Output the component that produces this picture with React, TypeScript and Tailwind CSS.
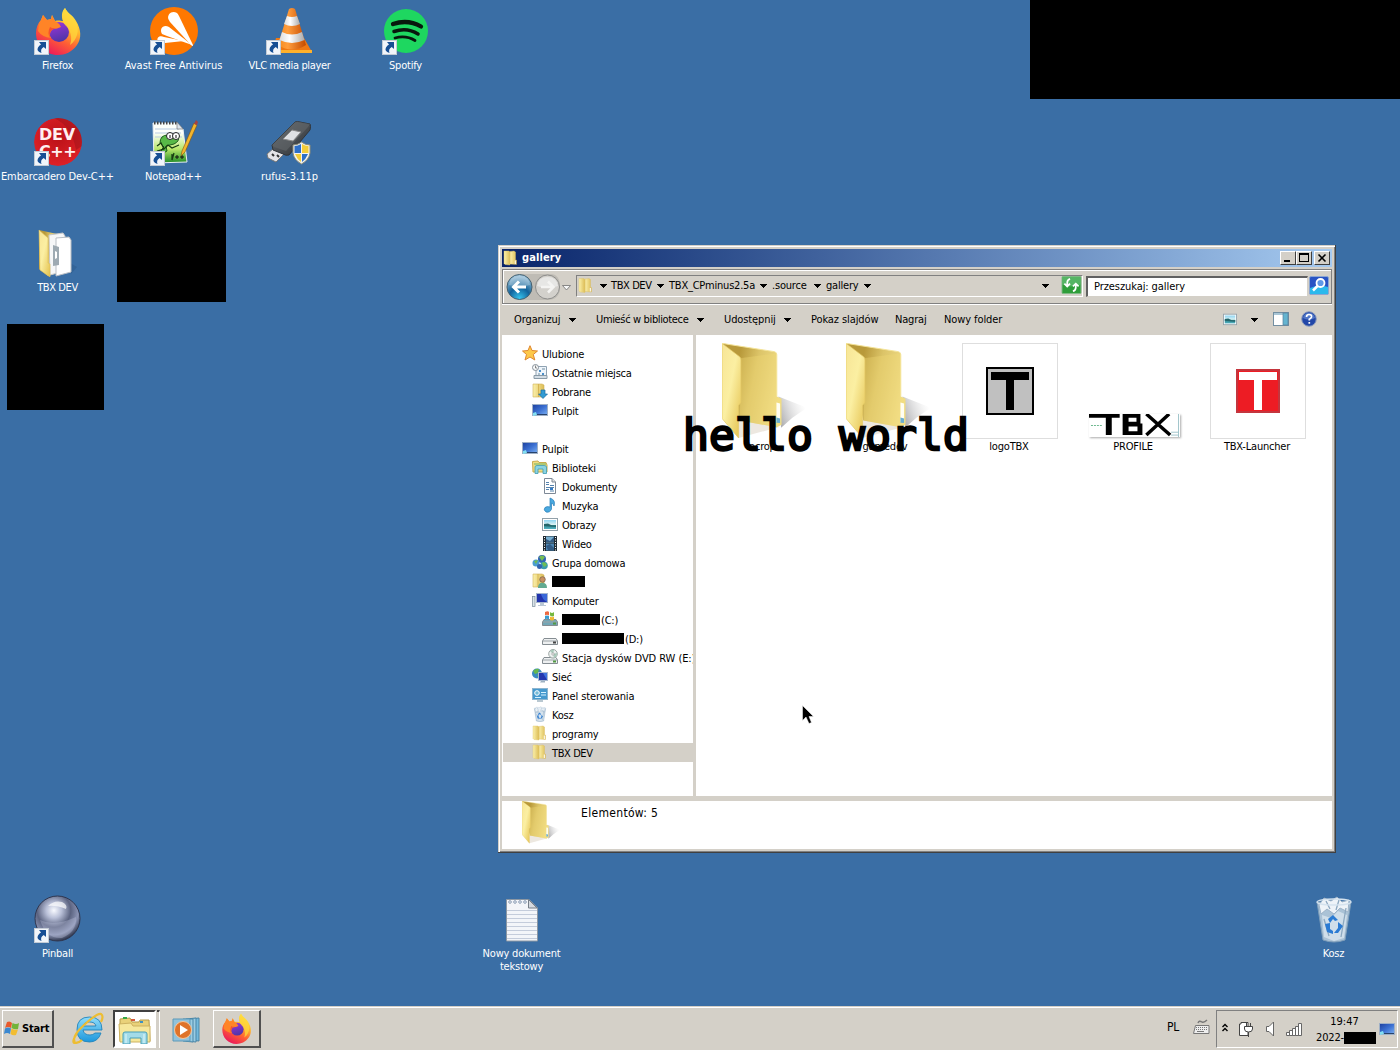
import React from "react";

type Props = { className?: string };

function Defs() {
  return (
    <svg className="absolute h-0 w-0" aria-hidden="true">
      <defs>
        <linearGradient id="ff" x1="0.8" y1="0" x2="0.25" y2="1">
          <stop offset="0" stopColor="#fff44f" />
          <stop offset="0.35" stopColor="#ffb52e" />
          <stop offset="0.62" stopColor="#ff6034" />
          <stop offset="1" stopColor="#e9125f" />
        </linearGradient>
        <linearGradient id="ffglobe" x1="0.3" y1="0" x2="0.6" y2="1">
          <stop offset="0" stopColor="#9a35d8" />
          <stop offset="1" stopColor="#4c35a5" />
        </linearGradient>
        <linearGradient id="flap" x1="0" y1="0" x2="1" y2="1">
          <stop offset="0" stopColor="#f7e596" />
          <stop offset="0.45" stopColor="#fbefa2" />
          <stop offset="1" stopColor="#e3c04c" />
        </linearGradient>
        <linearGradient id="fback" x1="0" y1="0.2" x2="1" y2="0.5">
          <stop offset="0.25" stopColor="#b8993a" />
          <stop offset="0.55" stopColor="#dcc468" />
          <stop offset="1" stopColor="#f3e08c" />
        </linearGradient>
        <linearGradient id="fshadow" x1="0" y1="0.6" x2="1" y2="0.2">
          <stop offset="0" stopColor="#8f8f93" stopOpacity="0.7" />
          <stop offset="0.9" stopColor="#ccc" stopOpacity="0" />
        </linearGradient>
        <linearGradient id="sfold" x1="0" y1="0" x2="1" y2="0">
          <stop offset="0" stopColor="#fbf0ab" />
          <stop offset="1" stopColor="#dcbc55" />
        </linearGradient>
        <linearGradient id="screen" x1="0" y1="0" x2="1" y2="1">
          <stop offset="0" stopColor="#1c3f9e" />
          <stop offset="0.5" stopColor="#3c70d2" />
          <stop offset="1" stopColor="#7fb4f3" />
        </linearGradient>
        <linearGradient id="sky" x1="0" y1="0" x2="0" y2="1">
          <stop offset="0" stopColor="#8ed4f2" />
          <stop offset="0.5" stopColor="#d9f2f4" />
          <stop offset="0.55" stopColor="#2a7f86" />
          <stop offset="1" stopColor="#53b3c4" />
        </linearGradient>
        <radialGradient id="back" cx="0.5" cy="0.95" r="0.95">
          <stop offset="0" stopColor="#35c4ee" />
          <stop offset="0.45" stopColor="#12629b" />
          <stop offset="0.55" stopColor="#2f76a6" />
          <stop offset="1" stopColor="#a9cbe0" />
        </radialGradient>
        <radialGradient id="ball" cx="0.42" cy="0.32" r="0.68">
          <stop offset="0" stopColor="#f8faff" />
          <stop offset="0.25" stopColor="#b9c0d8" />
          <stop offset="0.55" stopColor="#5b6380" />
          <stop offset="0.8" stopColor="#8b94b4" />
          <stop offset="1" stopColor="#343b52" />
        </radialGradient>
        <linearGradient id="cone" x1="0" y1="0" x2="1" y2="0">
          <stop offset="0" stopColor="#f58a1c" />
          <stop offset="0.35" stopColor="#ff9d3d" />
          <stop offset="1" stopColor="#c44a00" />
        </linearGradient>
        <linearGradient id="white" x1="0" y1="0" x2="1" y2="0">
          <stop offset="0" stopColor="#dcdcdc" />
          <stop offset="0.4" stopColor="#fff" />
          <stop offset="1" stopColor="#aaa" />
        </linearGradient>
        <linearGradient id="ie" x1="0" y1="0" x2="0" y2="1">
          <stop offset="0" stopColor="#8fdcfa" />
          <stop offset="1" stopColor="#1d97dc" />
        </linearGradient>
        <radialGradient id="dev" cx="0.5" cy="0.4" r="0.6">
          <stop offset="0" stopColor="#ba1118" />
          <stop offset="1" stopColor="#de2127" />
        </radialGradient>
        <linearGradient id="usb" x1="0" y1="0" x2="1" y2="1">
          <stop offset="0" stopColor="#6b6f73" />
          <stop offset="1" stopColor="#2c3034" />
        </linearGradient>
      </defs>
    </svg>
  );
}

function Firefox({ className }: Props) {
  return (
    <svg viewBox="0 0 48 48" className={className}>
      <path d="M31 1 C34 7 39 8 42 14 C47 22 48 31 43 38 C38 45 31 48 24 48 C11 48 2 38 2 26 C2 21 4 16 7 13 L9 8 L13 13 L17 12 L18 8 L21 14 C25 13 27 14 29 14 C27 9 28 4 31 1Z" fill="url(#ff)" />
      <circle cx="25" cy="25" r="10" fill="url(#ffglobe)" />
      <path d="M7 13 L9 8 L13 13 L17 12 L18 8 L21 14 Q25 16 27 20 Q23 22 19 22 Q14 26 17 31 Q8 30 4 24 Q4 18 7 13Z" fill="#ff8427" />
      <path d="M16 20 Q19 22 22 21 L18 23 Q15 25 16 31 Q13 26 16 20Z" fill="#f5502f" />
      <path d="M31 1 C34 7 39 9 42 15 C46 23 43 33 36 38 C39 30 36 22 31 18 C28 14 27 6 31 1Z" fill="#ffd83c" opacity="0.75" />
    </svg>
  );
}

function Avast() {
  return (
    <svg viewBox="0 0 48 48" className="h-12 w-12">
      <circle cx="24" cy="24" r="24" fill="#ff7800" />
      <path d="M18.3 12 C17 7 22 3 27 6 Q28 7 29 9 L43 38 Q43 40 41 38 L20 15Z" fill="#fff" />
      <path d="M12 27 C9 22 13 17 19 20 L42 38 L17 29Z" fill="#fff" />
      <path d="M8 35 C6 31 9 28 14 30 L34 34 L15 36Z" fill="#fff" />
    </svg>
  );
}

function Vlc() {
  return (
    <svg viewBox="0 0 48 48" className="h-12 w-12">
      <path d="M10 31 L38 31 L46 45 L6 45Z" fill="#ef7812" />
      <path d="M6 43 H46 V46 H6Z" fill="#ffb12b" />
      <path d="M23 2 Q26 0 29 2 L40 38 Q26 47 12 38Z" fill="url(#cone)" />
      <path d="M21 9 Q26 11 31 9 L34 17 Q26 21 18 17Z" fill="url(#white)" />
      <path d="M16 25 Q26 30 36 25 L38.500 33 Q26 39 13.500 33Z" fill="url(#white)" />
    </svg>
  );
}

function Spotify() {
  return (
    <svg viewBox="0 0 48 48" className="h-12 w-12">
      <circle cx="24" cy="24" r="22" fill="#1ed760" />
      <g fill="none" stroke="#08180d" strokeLinecap="round">
        <path d="M11 17 Q26 12 39 19.500" strokeWidth="4.300" />
        <path d="M12 24.500 Q25 20 36 27" strokeWidth="3.500" />
        <path d="M13 31 Q24 28 33 33.500" strokeWidth="2.800" />
      </g>
    </svg>
  );
}

function DevCpp() {
  return (
    <div className="relative h-12 w-12 overflow-hidden rounded-full">
      <svg viewBox="0 0 48 48" className="absolute inset-0 h-12 w-12">
        <circle cx="24" cy="24" r="24" fill="url(#dev)" />
        <path d="M20 0 Q38 8 42 32 L48 28 V0Z" fill="#9b1118" opacity="0.5" />
      </svg>
      <div className="absolute left-[5px] top-[8px] font-['DejaVu_Sans'] text-[16px] font-bold leading-[18px] text-[#fff0f0]">
        <div className="h-[17px]">DEV</div>
        <div className="tracking-[-0.5px]">C++</div>
      </div>
    </div>
  );
}

function NotepadPP() {
  return (
    <svg viewBox="0 0 48 48" className="h-12 w-12">
      <defs>
        <linearGradient id="npp" x1="0" y1="0" x2="0" y2="1">
          <stop offset="0.25" stopColor="#fdfffa" />
          <stop offset="0.65" stopColor="#b9e86a" />
          <stop offset="1" stopColor="#1d8a23" />
        </linearGradient>
      </defs>
      <path d="M3 5 H27 L33 11 L37 44 L4 45Z" fill="url(#npp)" stroke="#e8eef4" />
      <path d="M5 11 H29 M5 15 H31 M5 19 H32" stroke="#b9cbe0" />
      <path d="M4 5 H27" stroke="#444" strokeWidth="3" strokeDasharray="1.500 1.500" />
      <path d="M27 4 V11 H33Z" fill="#dde5ee" stroke="#777" strokeWidth="0.700" />
      <path d="M10 25 Q10 17 18 17 L28 19 Q30 23 24 26 L16 28 L17 33 Q13 36 11 32 L14 29Z" fill="#58b947" stroke="#1c5c19" />
      <path d="M7 28 L11 25 L14 31 L18 27 L22 30 L29 27 M7 33 L14 31 M24 35 L22 42 M22 36 V42" fill="none" stroke="#173d12" strokeWidth="1.300" />
      <circle cx="20" cy="18" r="3.500" fill="#fff" stroke="#222" />
      <circle cx="26" cy="18" r="3.500" fill="#fff" stroke="#222" />
      <path d="M20 17 V20 M26 17 V20 M25 39 H29 M27 37 V41 M30 39 H34 M32 37 V41" stroke="#111" strokeWidth="1" />
      <path d="M32 33 L44 5 L47 7 L35 34 L31 38Z" fill="#f2b52d" stroke="#805413" strokeWidth="0.600" />
      <path d="M44 6 L46 2 L48 4 L47 7Z" fill="#a6433f" />
    </svg>
  );
}

function Rufus() {
  return (
    <svg viewBox="0 0 48 48" className="h-12 w-12">
      <path d="M1 36 L8 30 L18 36 L10 44 L2 40Z" fill="#e4e4e8" stroke="#777" />
      <path d="M6 36 L8 38 M11 37 L13 39" stroke="#333" strokeWidth="2" />
      <path d="M6 27 L29 4 Q31 3 34 4 L44 6 Q45 8 44 12 L23 37 Q20 38 17 36 L7 32Z" fill="url(#usb)" stroke="#303439" />
      <path d="M6 27 L29 4 Q31 3 34 4 L44 6 L42 9 L20 33 L8 29Z" fill="#63676b" opacity="0.6" />
      <path d="M26 12 L35 14 L27 23 L17 21Z" fill="#dfe1e4" stroke="#8a8a8a" />
      <g transform="translate(26 24)">
        <path d="M1 3 Q6 3 9.500 0 Q13 3 18 3 V11 Q17 18 9.500 22 Q2 18 1 11Z" fill="#f3f3ee" stroke="#8d8b78" />
        <path d="M9 2 V11 H2.500 V4 Q6 4 9 2Z M10 12 H16 Q14 17 10 20Z" fill="#2e6fc8" />
        <path d="M10 2 V11 H16.500 V4 Q13 4 10 2Z M9 12 H3 Q5 17 9 20Z" fill="#f4cd38" />
      </g>
    </svg>
  );
}

function OpenFolder() {
  return (
    <svg viewBox="0 0 48 48" className="h-12 w-12">
      <path d="M36 34 L43 38 L37 45Z" fill="#173a63" opacity="0.200" />
      <path d="M5 1 L23 5 V44 L14 47 L5 40Z" fill="url(#fback)" />
      <path d="M15 6 L29 4 L31 7 V42 L16 46Z" fill="#f6f7f8" stroke="#c7c7c7" />
      <path d="M22 9 L35 8 L37 11 V43 L22 47Z" fill="#fff" stroke="#b9bec4" />
      <path d="M19 16 L25 18 V36 L19 37Z" fill="#9eaab2" />
      <path d="M21 22 L23 23 V29 L21 30Z" fill="#fff" />
      <path d="M5 1 L14 9 V34 L16 35 V48 L6 41Z" fill="url(#flap)" stroke="#dec05a" strokeWidth="0.600" />
    </svg>
  );
}

function Pinball() {
  return (
    <svg viewBox="0 0 48 48" className="h-12 w-12">
      <circle cx="23.500" cy="23.500" r="22.500" fill="url(#ball)" stroke="#303750" />
      <path d="M6 25 Q20 32 42 22 Q43 37 28 43 Q12 44 6 25Z" fill="#bdc4dd" opacity="0.350" />
      <path d="M14 11 Q20 5 28 7 Q34 10 32 14 Q22 10 14 11Z" fill="#fff" opacity="0.700" />
    </svg>
  );
}

function TextFile() {
  return (
    <svg viewBox="0 0 48 48" className="h-12 w-12">
      <path d="M8.500 4.500 H31 L39.500 13 V46 H8.500Z" fill="#f3f5f9" stroke="#8c97a3" />
      <path d="M9 15.500H39M9 19.500H39M9 23.500H39M9 27.500H39M9 31.500H39M9 35.500H39M9 39.500H39M9 43.500H39" stroke="#c4ccdb" />
      <path d="M30.500 4.500 V13 H39Z" fill="#d5d9df" stroke="#777f88" />
      <g fill="#f6f8fb" stroke="#8b9db5">
        <circle cx="12" cy="7" r="1.300" />
        <circle cx="17" cy="7" r="1.300" />
        <circle cx="22" cy="7" r="1.300" />
        <circle cx="27" cy="7" r="1.300" />
      </g>
    </svg>
  );
}

function Bin({ className }: Props) {
  return (
    <svg viewBox="0 0 48 48" className={className}>
      <path d="M7 7 L41 7 L35 45 Q24 49 13 45Z" fill="#b7cbdc" fillOpacity="0.9" stroke="#7f9eb9" />
      <path d="M9 10 L14 3 L21 6 L27 2 L32 7 L39 5 L38 17 L30 13 L24 19 L17 14 L11 19Z" fill="#eef3f8" stroke="#9db3c8" />
      <path d="M12 20 L21 23 L28 16 L37 20 L34 43 L24 46 L14 42Z" fill="#e3edf4" opacity="0.650" />
      <path d="M16 6 L20 14 M29 5 L26 15 M14 24 L19 41 M36 13 L31 42" stroke="#8ca8c0" strokeWidth="1.300" />
      <path d="M18 24 L23 20 L28 25 L25 26 L23 24 L20 28Z M15 29 L20 28 L20 34 L23 36 V39 L17 37Z M28 27 L33 31 L28 38 L24 38 L28 33Z" fill="#2b7bd3" />
      <ellipse cx="24" cy="7" rx="17" ry="3" fill="none" stroke="#d4e2ee" strokeWidth="1.300" />
    </svg>
  );
}

function ShortcutArrow() {
  return (
    <svg viewBox="0 0 15 15" className="absolute bottom-0 left-0 h-[15px] w-[15px]">
      <rect x="0.500" y="0.500" width="14" height="14" fill="#f1f5fa" stroke="#c3cbd5" />
      <path d="M5 2 H12 V9 L9.700 7 Q6 9 7.500 13 Q2 11 4 7.500 Q5 5.500 7 4.500Z" fill="#174f94" />
    </svg>
  );
}

function DesktopIcon({
  place,
  label,
  shortcut,
  children,
  track = "",
}: {
  place: string;
  label: string;
  shortcut?: boolean;
  children: React.ReactNode;
  track?: string;
}) {
  return (
    <div className={`absolute flex w-[122px] flex-col items-center ${place}`}>
      <div className="relative h-12 w-12">
        {children}
        {shortcut && <ShortcutArrow />}
      </div>
      <div className={`mr-px mt-1 whitespace-pre-line text-center leading-[13px] text-white ${track}`}>{label}</div>
    </div>
  );
}

function BigFolder({ className }: Props) {
  return (
    <svg viewBox="0 0 256 290" className={className}>
      <path d="M170 160 L256 194 L212 224 L178 254Z" fill="url(#fshadow)" />
      <path d="M0 225 L50 285 L172 252 L120 238Z" fill="#a68b65" opacity="0.200" />
      <path d="M0 0 L158 25 Q165 27 165 34 V160 L179 167 V245 L165 253 L52 232Z" fill="url(#fback)" />
      <path d="M54 45 L165 30 V160 L179 167 V245 L165 253 L54 232Z" fill="#f0d873" opacity="0.380" />
      <path d="M164 178 L175 181 V238 L164 236Z" fill="#fffef2" />
      <path d="M164 223 L175 226 V240 L164 239Z" fill="#6baed0" />
      <path d="M0 0 L53 40 Q57 43 57 50 V178 L50 187 V285 L0 226Z" fill="url(#flap)" stroke="#e4c965" strokeWidth="2" />
      <path d="M0 0 L158 25 Q165 27 165 34 V160" fill="none" stroke="#f4e49a" strokeWidth="3" />
    </svg>
  );
}

function SmallFolder({ className = "h-4 w-4" }: Props) {
  return (
    <svg viewBox="0 0 16 16" className={className}>
      <path d="M7 1.500 L11 1 L12.500 2 V10 H13.500 V14.500 L7 14Z" fill="url(#sfold)" stroke="#d8bc61" strokeWidth="0.400" />
      <path d="M1 1 L6 1 L7 2 V15 L2 14.500 L1 13.500Z" fill="url(#sfold)" stroke="#dec46c" strokeWidth="0.400" />
      <path d="M12.300 10.500V14" stroke="#fff" />
    </svg>
  );
}

function Monitor({ className = "h-4 w-4" }: Props) {
  return (
    <svg viewBox="0 0 16 16" className={className}>
      <rect x="0.500" y="2.500" width="15" height="11" fill="url(#screen)" stroke="#9fb0c7" />
      <path d="M1 12.500 H15" stroke="#27436c" />
      <path d="M1 11 L4 10 L5 13 L1 14Z" fill="#82dff2" />
    </svg>
  );
}

function Picture({ className = "h-4 w-4" }: Props) {
  return (
    <svg viewBox="0 0 16 16" className={className}>
      <rect x="0.500" y="2.500" width="15" height="12" fill="#fff" stroke="#93a1aa" />
      <rect x="2" y="4" width="12" height="9" fill="url(#sky)" />
      <path d="M2 8 L6 7.500 L10 9.500 L14 9.500 V11 L2 10Z" fill="#24666b" />
    </svg>
  );
}

function TreeIcon({ kind }: { kind: string }) {
  if (kind === "folder") return <SmallFolder />;
  if (kind === "desktop") return <Monitor />;
  if (kind === "picture") return <Picture />;
  if (kind === "bin") return <Bin className="h-4 w-4" />;
  return (
    <svg viewBox="0 0 16 16" className="h-4 w-4">
      {kind === "star" && <path d="M8 .7 L10 5.500 L15.500 6 L11.300 9.500 L12.800 15 L8 12 L3 15 L4.500 9.500 L.5 6 L6 5.500Z" fill="#fdc849" stroke="#df8630" />}
      {kind === "recent" && (
        <g>
          <path d="M4 2.500H14.500V12.500H4Z" fill="#eef5fb" stroke="#8fa2b2" />
          <path d="M2 11.500H15V14.500H2Z" fill="#d3dde5" stroke="#899aa7" />
          <path d="M7 6H9V8H7ZM10 9H12V11H10Z" fill="#4b8fc9" />
          <path d="M10 5H13M6 10H8" stroke="#718b9d" />
          <circle cx="3.500" cy="3.500" r="3" fill="#f8fafb" stroke="#879099" />
          <path d="M3.500 1.500V4H5" fill="none" stroke="#555" strokeWidth="0.700" />
        </g>
      )}
      {kind === "download" && (
        <g>
          <path d="M1 1H10L12 2V14H1Z" fill="url(#sfold)" stroke="#d1b257" strokeWidth="0.600" />
          <path d="M6.500 1V14" stroke="#d6b554" />
          <path d="M9 7H13V11H15.500L11 15.500L6.500 11H9Z" fill="#329bd3" stroke="#1b6ca1" strokeWidth="0.700" />
        </g>
      )}
      {kind === "library" && (
        <g>
          <path d="M.5 2.500 L6 2 L7 3.500H14L15 6V13H1Z" fill="#f2dd80" stroke="#c8ab4d" />
          <path d="M2 5H14" stroke="#6ab468" />
          <path d="M3 14.500V8Q3 6.500 5 6.500H12Q14.500 6.500 14.500 8V14.500H11V10H6V14.500Z" fill="#8bd3e2" stroke="#3f9db4" strokeWidth="0.800" />
        </g>
      )}
      {kind === "doc" && (
        <g>
          <path d="M2.500.5H10L13.500 4V15.500H2.500Z" fill="#fff" stroke="#7e8996" />
          <path d="M10 .5V4H13.500" fill="#ddd" stroke="#7e8996" />
          <path d="M4 4.500H7M4 6.500H7M8 7.500H12M4 9.500H12M4 11.500H7M8 13H12" stroke="#5583ae" />
          <path d="M8 10H11V12H8Z" fill="#357bc4" />
        </g>
      )}
      {kind === "music" && <path d="M8 1 Q14 3 12 9 Q11 6 9.500 6 V12 Q8 16 4 15 Q1 13 3 10.500 Q5 9 8 10Z" fill="#4aa9df" stroke="#287eb9" strokeWidth="0.700" />}
      {kind === "video" && (
        <g>
          <rect x="1" y="1" width="14" height="15" fill="#202b33" />
          <rect x="4" y="1.500" width="8" height="6" fill="#78afd1" />
          <rect x="4" y="8.500" width="8" height="7" fill="#4c86b4" />
          <path d="M4 4L8 6L12 2V7H4ZM4 11L8 9L12 13V15H6Z" fill="#315a83" />
          <path d="M2.500 2V16M13.500 2V16" stroke="#fff" strokeDasharray="1 1.500" />
        </g>
      )}
      {kind === "home" && (
        <g>
          <circle cx="10" cy="5" r="4" fill="#2f62b4" />
          <path d="M7 3Q10 0 13 3L10 7Z" fill="#75bd52" />
          <circle cx="4" cy="9" r="3.500" fill="#4b9dd0" />
          <circle cx="12" cy="11.500" r="3.800" fill="#3a9cae" />
          <path d="M2 7L6 6L4 10ZM10 9Q13 7 15 11L12 13Z" fill="#70bd51" />
          <circle cx="7.500" cy="12.500" r="2.500" fill="#3263b0" />
        </g>
      )}
      {kind === "user" && (
        <g>
          <path d="M1 1H10L12 2V14H1Z" fill="url(#sfold)" stroke="#d1b257" strokeWidth="0.600" />
          <path d="M6 1V14" stroke="#d6b554" />
          <circle cx="10.500" cy="6.500" r="2.800" fill="#c89062" stroke="#665343" strokeWidth="0.600" />
          <path d="M6 14Q7 9 11 10Q15 10 15 15H6Z" fill="#62aa91" />
        </g>
      )}
      {kind === "computer" && (
        <g>
          <rect x="0.500" y="4.500" width="2.500" height="10" fill="#dae3e8" stroke="#798b99" strokeWidth="0.700" />
          <rect x="4.500" y="1.500" width="11" height="9" fill="#2233ac" stroke="#a5b5ce" />
          <path d="M9 2H15V10Q10 7 9 2Z" fill="#3a68d8" />
          <path d="M8 11H12V13H14V14H6V13H8Z" fill="#b9c7d5" />
        </g>
      )}
      {(kind === "driveC" || kind === "drive" || kind === "dvd") && (
        <g>
          <path d="M2 8.500H14L15.500 11V14.500H.5V11Z" fill={kind === "driveC" ? "#73a7b7" : "#eef0f1"} stroke="#858d92" />
          <path d="M1 11H15" stroke="#9da4a8" />
          <rect x="11" y="11.500" width="3" height="2" fill={kind === "drive" ? "#444" : "#529944"} />
        </g>
      )}
      {kind === "driveC" && (
        <g>
          <path d="M3 1Q6-.5 7 1V4.500Q5 3 3 4.500Z" fill="#ed6940" />
          <path d="M8 1Q10 3 12 1V5Q10 6 8 4.500Z" fill="#76b83f" />
          <path d="M3 5Q5 4 7 5V9Q5 7 3 8.500Z" fill="#389bcf" />
          <path d="M8 5.500Q10 7 12 5.500V9Q10 10 8 9Z" fill="#f0b633" />
        </g>
      )}
      {kind === "dvd" && (
        <g>
          <circle cx="11" cy="4.800" r="4.300" fill="#edf1f0" stroke="#9ca6a4" />
          <path d="M11 5L8 2Q10 0 12 1ZM11 5L15 4Q15 8 12 9Z" fill="#a9cabb" />
          <circle cx="11" cy="5" r="1.200" fill="#fff" stroke="#888" strokeWidth="0.600" />
        </g>
      )}
      {kind === "network" && (
        <g>
          <circle cx="5" cy="5.500" r="5" fill="#3a8bc2" />
          <path d="M1 3Q4 0 7 1L6 5L3 6ZM5 7L8 6L7 10Z" fill="#66b84f" />
          <rect x="6.500" y="4.500" width="9" height="8" fill="#2237af" stroke="#a8bad0" />
          <path d="M11 5H15V12Z" fill="#3e73e0" />
          <path d="M9 13H13V14.500H8Z" fill="#9eb1c1" />
        </g>
      )}
      {kind === "panel" && (
        <g>
          <rect x="0.500" y="1.500" width="15" height="11" fill="#4699ce" stroke="#8db5d0" />
          <circle cx="5" cy="6" r="2.300" fill="#73bbd9" stroke="#fff" />
          <path d="M9 5.500H14M9 8H14M3 10.500H9" stroke="#d4f1ff" />
          <path d="M5 13H11V15H5Z" fill="#b9c8d1" />
        </g>
      )}
    </svg>
  );
}

const tree = [
  { label: "Ulubione", icon: "star", level: 0 },
  { label: "Ostatnie miejsca", icon: "recent", level: 1 },
  { label: "Pobrane", icon: "download", level: 1 },
  { label: "Pulpit", icon: "desktop", level: 1 },
  { label: "", icon: "", level: 0 },
  { label: "Pulpit", icon: "desktop", level: 0 },
  { label: "Biblioteki", icon: "library", level: 1 },
  { label: "Dokumenty", icon: "doc", level: 2 },
  { label: "Muzyka", icon: "music", level: 2 },
  { label: "Obrazy", icon: "picture", level: 2 },
  { label: "Wideo", icon: "video", level: 2 },
  { label: "Grupa domowa", icon: "home", level: 1 },
  { label: "", icon: "user", level: 1, bar: "w-[33px]" },
  { label: "Komputer", icon: "computer", level: 1 },
  { label: "(C:)", icon: "driveC", level: 2, bar: "w-[38px]" },
  { label: "(D:)", icon: "drive", level: 2, bar: "w-[62px]" },
  { label: "Stacja dysków DVD RW (E:)", icon: "dvd", level: 2, track: "tracking-[-0.07px]" },
  { label: "Sieć", icon: "network", level: 1 },
  { label: "Panel sterowania", icon: "panel", level: 1, track: "tracking-[-0.1px]" },
  { label: "Kosz", icon: "bin", level: 1 },
  { label: "programy", icon: "folder", level: 1 },
  { label: "TBX DEV", icon: "folder", level: 1, selected: true, track: "tracking-[-0.4px]" },
];
const indents = ["pl-5", "pl-[30px]", "pl-10"];

function Tree() {
  return (
    <div className="w-[191px] shrink-0 overflow-hidden bg-white pt-[9px]">
      {tree.map((t, i) => (
        <div
          key={i}
          className={`flex h-[19px] items-center whitespace-nowrap ${indents[t.level]} ${t.selected ? "bg-[#d4d0c8] shadow-[inset_1px_0_0_#fff]" : ""}`}
        >
          {t.icon && (
            <span className="mb-[2px] mr-1 h-4 w-4 shrink-0">
              <TreeIcon kind={t.icon} />
            </span>
          )}
          {t.bar && <span className={`mr-px h-[11px] shrink-0 bg-black ${t.bar}`} />}
          <span className={`pt-[2px] ${t.track ?? ""}`}>{t.label}</span>
        </div>
      ))}
    </div>
  );
}

function Caret({ className = "" }: Props) {
  return (
    <svg viewBox="0 0 7 4" className={`h-1 w-[7px] shrink-0 ${className}`} shapeRendering="crispEdges">
      <path d="M0 0H7L3.500 4Z" />
    </svg>
  );
}

function CaptionButton({ kind }: { kind: "min" | "max" | "close" }) {
  return (
    <div className="flex h-[14px] w-4 items-center justify-center border border-b-[#404040] border-l-white border-r-[#404040] border-t-white bg-[#d4d0c8]">
      <svg viewBox="0 0 12 10" className="h-[10px] w-3" fill="none" stroke="#000" shapeRendering={kind === "close" ? "auto" : "crispEdges"}>
        {kind === "min" && <path d="M2 8H8" strokeWidth="2" />}
        {kind === "max" && <path d="M1.500 1V8.500H10.500V1M1 1H11" strokeWidth="1.400" />}
        {kind === "close" && <path d="M2.500 1.500L9.500 8.500M9.500 1.500L2.500 8.500" strokeWidth="1.600" />}
      </svg>
    </div>
  );
}

function Crumb({ label, gap }: { label: string; gap: string }) {
  return <span className={`shrink-0 whitespace-nowrap ${gap}`}>{label}</span>;
}

function NavBar() {
  return (
    <div className="flex h-[35px] items-center border border-[#808080] pl-[3px] shadow-[inset_1px_1px_0_#fff,0_1px_0_#fff]">
      <svg viewBox="0 0 66 28" className="h-7 w-[66px] shrink-0">
        <path d="M13 1 H44 Q54 1 54 14 Q54 27 41 27 H13Z" fill="#bfbcb5" />
        <circle cx="13.500" cy="14" r="12.500" fill="url(#back)" stroke="#44606f" />
        <path d="M3 12Q4 3 13.500 3Q23 3 24 12Q13 15 3 12Z" fill="#fff" opacity="0.250" />
        <path d="M20 14H8M13 8.500L7.500 14L13 19.500" fill="none" stroke="#fff" strokeWidth="3" />
        <circle cx="41.500" cy="14" r="12" fill="#d3d1cc" stroke="#8e8e8c" />
        <path d="M31 13Q32 4 41.500 4Q51 4 52 13Q42 17 31 13Z" fill="#eee" opacity="0.750" />
        <path d="M35 14H47M42 8.500L47.500 14L42 19.500" fill="none" stroke="#f4f4f2" strokeWidth="2.500" />
        <path d="M56.500 12.500H64.500L60.500 17Z" fill="#f7f7f7" stroke="#707070" strokeWidth="0.800" />
      </svg>
      <div className="mb-px ml-1 flex h-[22px] w-[507px] shrink-0 items-center border border-b-white border-l-[#808080] border-r-white border-t-[#808080] pb-px pl-px">
        <SmallFolder className="h-[17px] w-4" />
        <Caret className="ml-[6px] w-[6px]" />
        <Crumb label="TBX DEV" gap="ml-[4px] w-[46px] tracking-[-0.4px]" />
        <Caret className="w-[6px]" />
        <Crumb label="TBX_CPminus2.5a" gap="ml-[5px] w-[91px] tracking-[-0.22px]" />
        <Caret className="w-[6px]" />
        <Crumb label=".source" gap="ml-[5px] w-[42px]" />
        <Caret className="w-[6px]" />
        <Crumb label="gallery" gap="ml-[5px] w-[38px]" />
        <Caret className="w-[6px]" />
        <span className="flex-1" />
        <Caret className="mr-3 w-2" />
        <svg viewBox="0 0 21 20" className="h-[19px] w-[21px] shrink-0">
          <rect x="0.500" y="0.500" width="20" height="18" rx="1" fill="#2f9e3a" stroke="#80b985" />
          <path d="M1 1H20V9Q10 13 1 9Z" fill="#75c986" opacity="0.550" />
          <path d="M9 3Q6 4 6 7V10M3 8L6 11L9 8M12 16Q15 15 15 12V9M12 11L15 8L18 11" fill="none" stroke="#fff" strokeWidth="1.800" />
        </svg>
      </div>
      <div className="mb-px ml-[3px] flex h-[21px] w-[222px] shrink-0 items-center border-b border-l-2 border-r border-t-2 border-b-[#d4d0c8] border-l-[#606060] border-r-[#d4d0c8] border-t-[#606060] bg-white pl-[6px] tracking-[-0.08px]">
        Przeszukaj: gallery
      </div>
      <svg viewBox="0 0 20 20" className="mb-px ml-[1px] h-5 w-5 shrink-0">
        <rect x="0.500" y="0.500" width="19" height="18" rx="1.500" fill="#2853c4" stroke="#8ca6d1" />
        <path d="M1 12Q10 8 19 11V18H1Z" fill="#2bb9ec" />
        <circle cx="11.500" cy="7" r="4" fill="#5f98e7" stroke="#fff" strokeWidth="1.800" />
        <path d="M8.500 10L4 14.500" stroke="#fff" strokeWidth="2.500" />
      </svg>
    </div>
  );
}

function Toolbar() {
  return (
    <div className="flex h-[31px] items-center whitespace-nowrap pl-3">
      <span className="w-[55px] tracking-[-0.1px]">Organizuj</span>
      <Caret />
      <span className="ml-5 w-[101px] tracking-[-0.35px]">Umieść w bibliotece</span>
      <Caret />
      <span className="ml-5 w-[60px] tracking-[-0.1px]">Udostępnij</span>
      <Caret />
      <span className="ml-5 w-[84px] tracking-[-0.1px]">Pokaz slajdów</span>
      <span className="w-[49px]">Nagraj</span>
      <span className="tracking-[-0.1px]">Nowy folder</span>
      <span className="flex-1" />
      <Picture className="mb-[2px] h-[14px] w-[14px]" />
      <Caret className="ml-[14px] mr-[15px]" />
      <svg viewBox="0 0 16 14" className="mb-[2px] h-[14px] w-4">
        <rect x="0.500" y="0.500" width="15" height="13" fill="#fff" stroke="#738fa2" />
        <path d="M1 2H10" stroke="#a9c6d6" strokeWidth="2" />
        <rect x="10" y="1" width="5" height="12" fill="#64b4d0" stroke="#577f9b" strokeWidth="0.700" />
      </svg>
      <svg viewBox="0 0 16 16" className="mb-[2px] ml-3 mr-[15px] h-4 w-4">
        <circle cx="8" cy="8" r="7.300" fill="#2247a8" stroke="#8d9cbc" />
        <path d="M2 7Q3 2 8 2Q13 2 14 7Q8 10 2 7Z" fill="#7196dc" opacity="0.600" />
        <path d="M5.500 6Q5.500 3.500 8 3.500Q11 3.500 10.500 6Q10 7.500 8.300 8.200V9.500M8.300 11V12.800" fill="none" stroke="#fff" strokeWidth="1.700" />
      </svg>
    </div>
  );
}

function FileCell({ label, children }: { label: string; children: React.ReactNode }) {
  return (
    <div className="flex w-[124px] flex-col items-center">
      <div className="ml-[2px] flex h-[97px] items-start">{children}</div>
      <span className="leading-[13px]">{label}</span>
    </div>
  );
}

function Files() {
  return (
    <div className="flex flex-1 bg-white pl-[3px] pt-2">
      <FileCell label="incrop">
        <BigFolder className="ml-[5px] h-[97px] w-[85px]" />
      </FileCell>
      <FileCell label="gamedev">
        <BigFolder className="ml-[5px] h-[97px] w-[85px]" />
      </FileCell>
      <FileCell label="logoTBX">
        <div className="flex h-24 w-24 items-center justify-center border border-[#dedede]">
          <svg viewBox="0 0 48 48" className="h-12 w-12" shapeRendering="crispEdges">
            <rect x="1" y="1" width="46" height="46" fill="#c0c0c0" stroke="#000" strokeWidth="2" />
            <path d="M5 5H43V13H28V43H20V13H5Z" />
          </svg>
        </div>
      </FileCell>
      <FileCell label="PROFILE">
        <div className="flex h-24 items-end pb-[2px]">
          <svg viewBox="0 0 92 24" className="h-[23px] w-[91px] shadow-[1px_1px_2px_#aaa]" preserveAspectRatio="none">
            <rect width="92" height="24" fill="#fff" />
            <path d="M0 0H31V4H23V22H17V4H0ZM34 0H52V10H54V22H34ZM40 4V8H48V4ZM40 13V18H49V13Z" fillRule="evenodd" />
            <path d="M58 0L82 22M81 0L58 22" stroke="#000" strokeWidth="3.500" />
            <path d="M2 12H14" stroke="#6ab78d" strokeDasharray="2 1" />
            <path d="M83 19H91M83 22H91M90.500 0V24" stroke="#9fc3cb" />
          </svg>
        </div>
      </FileCell>
      <FileCell label="TBX-Launcher">
        <div className="flex h-24 w-24 items-center justify-center border border-[#dedede]">
          <svg viewBox="0 0 44 44" className="h-11 w-11">
            <rect x="1" y="1" width="42" height="42" fill="#ed1c24" stroke="#c4353d" strokeWidth="2" />
            <path d="M3 3H41V11H26V41H18V11H3Z" fill="#fff" />
          </svg>
        </div>
      </FileCell>
    </div>
  );
}

function ExplorerWindow() {
  return (
    <div className="absolute left-[498px] top-[245px] flex h-[608px] w-[838px] flex-col border-b border-r border-[#404040] bg-[#d4d0c8] p-[3px] pl-1 pt-1 shadow-[inset_1px_1px_0_#d4d0c8,inset_2px_2px_0_#fff,inset_-1px_-1px_0_#808080]">
      <div className="flex h-[18px] shrink-0 items-center bg-gradient-to-r from-[#0a246a] to-[#a6caf0] pl-px">
        <SmallFolder />
        <span className="ml-[3px] flex-1 font-bold tracking-[0.1px] text-white">gallery</span>
        <div className="mr-[2px] flex">
          <CaptionButton kind="min" />
          <CaptionButton kind="max" />
          <span className="w-[2px]" />
          <CaptionButton kind="close" />
        </div>
      </div>
      <div className="mt-[2px]">
        <NavBar />
      </div>
      <Toolbar />
      <div className="flex h-[461px] shrink-0">
        <Tree />
        <div className="w-[3px] bg-[#d4d0c8]" />
        <Files />
      </div>
      <div className="mt-[5px] flex h-12 shrink-0 bg-white pl-5">
        <BigFolder className="h-[43px] w-[38px]" />
        <span className="ml-[21px] mt-[3px] text-[12px] leading-[18px] tracking-[0.32px]">Elementów: 5</span>
      </div>
    </div>
  );
}

function Taskbar() {
  return (
    <div className="absolute inset-x-0 bottom-0 flex h-11 border-t border-[#d4d0c8] bg-[#d4d0c8] pt-[3px] shadow-[inset_0_1px_0_#fff]">
      <div className="ml-[2px] flex h-[38px] w-[52px] items-center border-b-2 border-l border-r-2 border-t border-b-[#505050] border-l-white border-r-[#505050] border-t-white pl-px">
        <svg viewBox="0 0 16 15" className="h-[15px] w-4">
          <path d="M3 1Q6-.5 8 2L7 7Q4 5 1 7Z" fill="#e85a2c" />
          <path d="M8.500 2Q12 4 15 2L14 8Q11 9 7.500 7Z" fill="#72b43a" />
          <path d="M1 7.500Q4 5.500 7 7.500L6 13Q3 11 0 13Z" fill="#3b88d0" />
          <path d="M7.500 7.500Q11 9.500 14 8.500L12 14Q9 15 6.500 13Z" fill="#f2bd31" />
        </svg>
        <span className="ml-[2px] font-bold tracking-[-0.15px] text-black">Start</span>
      </div>
      <svg viewBox="0 0 32 32" className="ml-[18px] mt-[2px] h-8 w-8">
        <path d="M30 18H11Q12 23 18 23Q21 23 23 21H29Q26 30 17.500 30Q5 30 5 17.500Q5 5 17.500 5Q30 5 30 18ZM11 14H24Q23 10 17.500 10Q12 10 11 14Z" fillRule="evenodd" fill="url(#ie)" stroke="#2384bb" strokeWidth="0.900" />
        <path d="M5 21Q-1 31 3 31Q7 31 10 28M3 30Q-1 25 12 13Q25 1 29 2Q32 4 29 10" fill="none" stroke="#edbd32" strokeWidth="2.200" />
      </svg>
      <div className="ml-[9px] flex h-[38px] w-[43px] items-center justify-center border-2 border-b-white border-l-[#404040] border-r-white border-t-[#404040] bg-white">
        <svg viewBox="0 0 34 30" className="h-[30px] w-[34px]">
          <path d="M2 5L12 4L14 8H21L22 6H31L32 27H2Z" fill="#e9d179" stroke="#b69b4a" />
          <path d="M1 10L13 9L15 12H32V28H2Z" fill="#f6e79b" stroke="#cdb260" />
          <path d="M5 3H9V5H5Z" fill="#35a847" />
          <path d="M13 5H17V7H13Z" fill="#d5593a" />
          <path d="M22 7H25V9H22Z" fill="#3c91c4" />
          <path d="M5 30V20Q5 18 7 18H27Q29 18 29 20V30H23V24H12V30Z" fill="#a3dbe8" stroke="#489fb8" />
          <path d="M8 20V29M26 20V29" stroke="#e0f8fb" />
        </svg>
      </div>
      <div className="ml-px h-[38px] w-[3px] border-r border-t-2 border-r-white border-t-[#404040]" />
      <svg viewBox="0 0 30 28" className="ml-[12px] mt-[6px] h-7 w-[30px]">
        <path d="M17 3L27 2V25L17 24Z" fill="#72b9dc" stroke="#4b86a7" />
        <path d="M14 3L24 2V26L14 25Z" fill="#9acce3" stroke="#4b86a7" />
        <path d="M11 3L21 3V26L11 25Z" fill="#9acce3" stroke="#4b86a7" />
        <path d="M1 3H18V25H1Z" fill="#91c2dc" stroke="#5c99b8" />
        <circle cx="11" cy="14" r="8.500" fill="#df732a" stroke="#f6c79b" />
        <path d="M8 9V19L16 14Z" fill="#fff" />
      </svg>
      <div className="ml-[11px] flex h-[38px] w-12 items-center justify-center border-b-2 border-l border-r-2 border-t border-b-[#505050] border-l-white border-r-[#505050] border-t-white">
        <Firefox className="h-[31px] w-[31px]" />
      </div>
      <span className="flex-1" />
      <span className="mt-[10px] text-[12px] leading-[14px]">PL</span>
      <svg viewBox="0 0 17 16" className="ml-[14px] mt-[9px] h-4 w-[17px]" fill="none" stroke="#777">
        <path d="M5 4Q6 1 9 3Q11 4 14 1" strokeWidth="1.400" />
        <path d="M2.500 6.500H16V14.500H.5Z" fill="#eee" />
        <path d="M3 8.500H14M3 10.500H14" strokeDasharray="1 1" />
        <path d="M4 12.500H11" />
      </svg>
      <div className="ml-[6px] mr-[2px] flex h-[38px] w-[182px] border border-b-white border-l-[#808080] border-r-white border-t-[#808080]">
        <svg viewBox="0 0 6 9" className="ml-[5px] mt-[12px] h-[9px] w-[6px]" fill="none" stroke="#000" strokeWidth="1.400">
          <path d="M.5 4L3 1.500L5.500 4M.5 8L3 5.500L5.500 8" />
        </svg>
        <svg viewBox="0 0 16 16" className="ml-[10px] mt-[10px] h-4 w-4" fill="#fff" stroke="#444">
          <path d="M3 1.500H10V14.500H1.500V3H3Z" />
          <path d="M6.500 5.500H14.500V8Q14.500 11 10.500 11Q6.500 11 6.500 8ZM8.500 2V5M12.500 2V5M10.500 11V16" />
        </svg>
        <svg viewBox="0 0 9 16" className="ml-3 mt-[10px] h-4 w-[9px]" fill="#fff" stroke="#666">
          <path d="M.5 5.500H3L7.500 1V15L3 10.500H.5Z" />
        </svg>
        <svg viewBox="0 0 17 14" className="ml-[11px] mt-[11px] h-[14px] w-[17px]" fill="#fff" stroke="#666">
          <path d="M.5 10.500H3.500V13.500H.5ZM3.500 8.500H6.500V13.500H3.500ZM6.500 6.500H9.500V13.500H6.500ZM9.500 4.500H12.500V13.500H9.500ZM12.500 1.500H15.500V13.500H12.500Z" />
        </svg>
        <div className="ml-[13px] flex w-[60px] flex-col items-center pt-[3px] leading-4">
          <span className="mr-[3px] tracking-[0px]">19:47</span>
          <span className="flex items-center whitespace-nowrap">
            2022-<i className="h-3 w-8 bg-black" />
          </span>
        </div>
        <Monitor className="ml-[3px] mt-[10px] h-4 w-4" />
      </div>
    </div>
  );
}

export default function App() {
  return (
    <main className="relative h-[1050px] w-[1400px] overflow-hidden bg-[#3a6ea5] font-['DejaVu_Sans_Condensed','DejaVu_Sans',sans-serif] text-[11px] leading-[14px] tracking-[-0.2px] text-black">
      <Defs />
      <DesktopIcon place="left-[-3px] top-[7px]" label="Firefox" shortcut><Firefox className="h-12 w-12" /></DesktopIcon>
      <DesktopIcon place="left-[113px] top-[7px]" label="Avast Free Antivirus" track="tracking-[-0.02px]" shortcut><Avast /></DesktopIcon>
      <DesktopIcon place="left-[229px] top-[7px]" label="VLC media player" track="tracking-[-0.35px]" shortcut><Vlc /></DesktopIcon>
      <DesktopIcon place="left-[345px] top-[7px]" label="Spotify" shortcut><Spotify /></DesktopIcon>
      <DesktopIcon place="left-[-3px] top-[118px]" label="Embarcadero Dev-C++" track="tracking-[-0.12px]" shortcut><DevCpp /></DesktopIcon>
      <DesktopIcon place="left-[113px] top-[118px]" label="Notepad++" shortcut><NotepadPP /></DesktopIcon>
      <DesktopIcon place="left-[229px] top-[118px]" label="rufus-3.11p" track="tracking-[0px]"><Rufus /></DesktopIcon>
      <DesktopIcon place="left-[-3px] top-[229px]" label="TBX DEV" track="tracking-[-0.4px]"><OpenFolder /></DesktopIcon>
      <DesktopIcon place="left-[-3px] top-[895px]" label="Pinball" shortcut><Pinball /></DesktopIcon>
      <DesktopIcon place="left-[461px] top-[895px]" label={"Nowy dokument\ntekstowy"}><TextFile /></DesktopIcon>
      <DesktopIcon place="left-[1273px] top-[895px]" label="Kosz"><Bin className="h-12 w-12" /></DesktopIcon>
      <div className="absolute left-[1030px] top-0 h-[99px] w-[370px] bg-black" />
      <div className="absolute left-[117px] top-[212px] h-[90px] w-[109px] bg-black" />
      <div className="absolute left-[7px] top-[324px] h-[86px] w-[97px] bg-black" />
      <ExplorerWindow />
      <div className="absolute left-[683px] top-[409px] whitespace-pre font-['DejaVu_Sans_Mono',monospace] text-[43px] leading-[52px] tracking-[0.1px] text-black [-webkit-text-stroke:2.4px_#000]">hello world</div>
      <svg viewBox="0 0 12 19" className="absolute left-[802px] top-[705px] h-[19px] w-3">
        <path d="M.5.500V15.500L4 12L7 18.500L9.500 17.500L7 11.500H11.500Z" fill="#000" stroke="#fff" strokeWidth="0.500" />
      </svg>
      <Taskbar />
    </main>
  );
}
